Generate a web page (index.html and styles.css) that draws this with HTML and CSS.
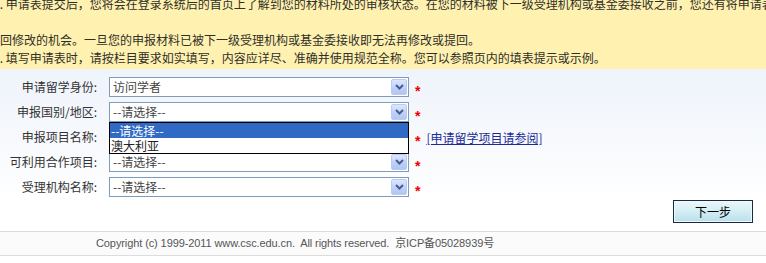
FILE: index.html
```html
<!DOCTYPE html>
<html lang="zh-CN">
<head>
  <meta charset="UTF-8">
  <title>国家留学基金 | 申请表</title>
  <link rel="stylesheet" href="styles.css">
</head>
<body>

  <div class="notice">
    <p class="line">4. 申请表提交后，您将会在登录系统后的首页上了解到您的材料所处的审核状态。在您的材料被下一级受理机构或基金委接收之前，您还有将申请表撤</p>
    <p class="line blank">&nbsp;</p>
    <p class="line flush">回修改的机会。一旦您的申报材料已被下一级受理机构或基金委接收即无法再修改或提回。</p>
    <p class="line">7. 填写申请表时，请按栏目要求如实填写，内容应详尽、准确并使用规范全称。您可以参照页内的填表提示或示例。</p>
  </div>

  <main class="form">
    <div class="row">
      <span class="label">申请留学身份:</span>
      <div class="select">
        <span class="value">访问学者</span>
        <span class="arrow"><svg width="9" height="6" viewBox="0 0 9 6"><path d="M1 1 L4.5 4.5 L8 1" fill="none" stroke="#4a5d87" stroke-width="2"/></svg></span>
      </div>
      <span class="req">*</span>
    </div>

    <div class="row">
      <span class="label">申报国别/地区:</span>
      <div class="select open">
        <span class="value">--请选择--</span>
        <span class="arrow"><svg width="9" height="6" viewBox="0 0 9 6"><path d="M1 1 L4.5 4.5 L8 1" fill="none" stroke="#4a5d87" stroke-width="2"/></svg></span>
        <ul class="dropdown">
          <li class="active">--请选择--</li>
          <li>澳大利亚</li>
        </ul>
      </div>
      <span class="req">*</span>
    </div>

    <div class="row">
      <span class="label">申报项目名称:</span>
      <div class="select covered">
        <span class="value">--请选择--</span>
        <span class="arrow"><svg width="9" height="6" viewBox="0 0 9 6"><path d="M1 1 L4.5 4.5 L8 1" fill="none" stroke="#4a5d87" stroke-width="2"/></svg></span>
      </div>
      <span class="req">*</span>
      <a href="#" class="ref">[申请留学项目请参阅]</a>
    </div>

    <div class="row">
      <span class="label">可利用合作项目:</span>
      <div class="select">
        <span class="value">--请选择--</span>
        <span class="arrow"><svg width="9" height="6" viewBox="0 0 9 6"><path d="M1 1 L4.5 4.5 L8 1" fill="none" stroke="#4a5d87" stroke-width="2"/></svg></span>
      </div>
      <span class="req">*</span>
    </div>

    <div class="row">
      <span class="label">受理机构名称:</span>
      <div class="select">
        <span class="value">--请选择--</span>
        <span class="arrow"><svg width="9" height="6" viewBox="0 0 9 6"><path d="M1 1 L4.5 4.5 L8 1" fill="none" stroke="#4a5d87" stroke-width="2"/></svg></span>
      </div>
      <span class="req">*</span>
    </div>

    <div class="actions">
      <button class="btn">下一步</button>
    </div>
  </main>

  <footer>
    Copyright (c) 1999-2011 www.csc.edu.cn.&nbsp; All rights reserved.&nbsp; 京ICP备05028939号
  </footer>

</body>
</html>
```

FILE: styles.css
```css
:root {
  --text: #333;
  --notice: #fff1b0;
  --border: #7f9db9;
  --highlight: #316ac5;
  --red: #e00;
  --link: #1a2a96;
  --font: "Noto Sans CJK SC", "Noto Sans", sans-serif;
}
* { box-sizing: border-box; margin: 0; padding: 0; }
html, body { height: 100%; }
body {
  font: 12px/18px var(--font);
  color: var(--text);
  background: linear-gradient(#e3ecf8 0, #eef3fb 60px, #f8fafd 150px, #fff 200px);
  overflow: hidden;
}

/* aviso superior */
.notice {
  background: var(--notice);
  margin-top: -5px;
  padding-bottom: 2px;
  height: 74px;
  color: #2f2f28;
}
.notice .line { white-space: nowrap; overflow: hidden; text-indent: -7px; }
.notice .flush { text-indent: 0; }

/* formulario */
.form { padding-top: 8px; }
.row { display: flex; align-items: center; height: 20px; margin-bottom: 5px; }
.label { width: 97px; text-align: right; margin-right: 12px; white-space: nowrap; }
.select {
  position: relative;
  width: 300px; height: 20px;
  border: 1px solid var(--border);
  background: #fff;
  display: flex; align-items: center;
}
.select .value { flex: 1; padding-left: 3px; line-height: 18px; color: #444; }
.select.covered .value { visibility: hidden; }
.select .arrow {
  width: 16px; height: 16px;
  margin-right: 1px;
  border: 1px solid #b9cbf3;
  border-radius: 2px;
  background: linear-gradient(#dce7fe, #bccffa 60%, #b2c6f4);
  display: flex; align-items: center; justify-content: center;
}
.dropdown {
  position: absolute; top: 19px; left: -1px;
  width: 300px;
  list-style: none;
  background: #fff;
  border: 1px solid #000;
  z-index: 2;
}
.dropdown li { height: 15px; line-height: 15px; padding-left: 1px; color: #222; }
.dropdown li.active { background: var(--highlight); color: #fff; }
.req {
  color: var(--red);
  font: bold 14px/14px "Liberation Sans", sans-serif;
  margin-left: 6px; margin-top: 7px;
}
.ref { color: var(--link); margin-left: 6px; margin-top: 2px; }

.actions { display: flex; justify-content: flex-end; padding-right: 13px; margin-top: -2px; }
.btn {
  width: 80px; height: 23px;
  font: 12px var(--font);
  color: #000;
  border: 1px solid #1b2944;
  box-shadow: inset 0 0 0 1px #eef9fb;
  background: linear-gradient(#eaf8fa, #d3eef4 50%, #b9dfea);
  cursor: pointer;
}

footer {
  margin-top: 8px;
  height: 25px;
  border-top: 1px solid #dcdcdc;
  border-bottom: 1px solid #dcdcdc;
  padding-left: 96px;
  font: 11px/23px "Liberation Sans", "Noto Sans CJK SC", sans-serif;
  letter-spacing: -0.1px;
  color: #555;
  background: #fbfbfb;
}
```
